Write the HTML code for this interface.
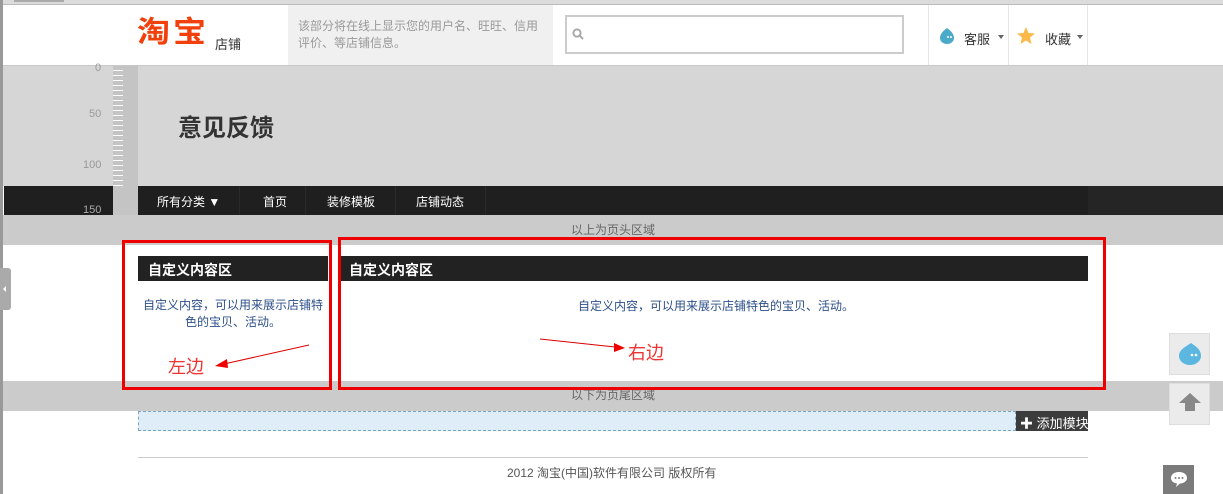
<!DOCTYPE html>
<html><head><meta charset="utf-8"><style>
*{margin:0;padding:0;box-sizing:border-box}
body{width:1223px;height:494px;overflow:hidden;background:#fff;position:relative;font-family:"Liberation Sans","Noto Sans CJK SC",sans-serif;font-size:12px;color:#333}
.a{position:absolute}
.t{position:absolute;white-space:nowrap}
.rul{background:#c4c4c4;background-image:repeating-linear-gradient(to bottom,transparent 0 4px,#fff 4px 5px);background-size:10px 100%;background-repeat:no-repeat}
</style></head><body>
<div class="a" style="left:0;top:0;width:1223px;height:5px;background:#dcdcdc;border-bottom:1px solid #bbb"></div>
<div class="a" style="left:14px;top:0;width:50px;height:2px;background:#aaa"></div>
<!-- header -->
<div class="t" style="left:137px;top:16px;font-size:33px;font-weight:bold;color:#f1400b;letter-spacing:3px;line-height:36px;transform:scaleY(0.9);transform-origin:top left">淘宝</div>
<div class="t" style="left:215px;top:34px;font-size:13px;color:#333">店铺</div>
<div class="a" style="left:288px;top:5px;width:265px;height:60px;background:#f0f0f0"></div>
<div class="t" style="left:298px;top:18px;font-size:12px;color:#999;line-height:17px">该部分将在线上显示您的用户名、旺旺、信用<br>评价、等店铺信息。</div>
<div class="a" style="left:565px;top:15px;width:339px;height:39px;border:2px solid #ccc;background:#fff"></div>
<svg class="a" style="left:572px;top:28px" width="12" height="12"><circle cx="5" cy="5" r="3.6" stroke="#aaa" stroke-width="2" fill="none"/><line x1="8" y1="8" x2="11" y2="11" stroke="#aaa" stroke-width="2"/></svg>
<div class="a" style="left:928px;top:5px;width:1px;height:60px;background:#e6e6e6"></div>
<div class="a" style="left:1008px;top:5px;width:1px;height:60px;background:#e6e6e6"></div>
<div class="a" style="left:1087px;top:5px;width:1px;height:60px;background:#e6e6e6"></div>
<svg class="a" style="left:939px;top:27px" width="17" height="18"><path d="M8 1 C4 4 1 7 1 11 a7 6 0 0 0 14 0 C15 7 12 4 8 1z" fill="#4ba9c9"/><circle cx="9" cy="10" r="1" fill="#fff"/><circle cx="12" cy="10" r="1" fill="#fff"/></svg>
<div class="t" style="left:964px;top:29px;font-size:13px;color:#333">客服</div>
<div class="a" style="left:998px;top:35px;border:3px solid transparent;border-top:4px solid #666"></div>
<svg class="a" style="left:1017px;top:27px" width="18" height="17"><polygon points="9,0 11.5,6 18,6.5 13,10.5 14.5,17 9,13.5 3.5,17 5,10.5 0,6.5 6.5,6" fill="#fbb84b"/></svg>
<div class="t" style="left:1045px;top:29px;font-size:13px;color:#333">收藏</div>
<div class="a" style="left:1077px;top:35px;border:3px solid transparent;border-top:4px solid #666"></div>
<!-- banner -->
<div class="a" style="left:0;top:65px;width:1223px;height:121px;background:#d6d6d6;border-top:1px solid #c8c8c8"></div>
<div class="a rul" style="left:113px;top:66px;width:25px;height:149px"></div>
<div class="t" style="left:178px;top:108px;font-size:24px;font-weight:bold;color:#333">意见反馈</div>
<!-- nav -->
<div class="a" style="left:4px;top:186px;width:1219px;height:29px;background:#1f1f1f"></div>
<div class="a" style="left:1088px;top:186px;width:135px;height:29px;background:#252525"></div>
<div class="a rul" style="left:113px;top:186px;width:25px;height:29px;background-position:0 -120px"></div>
<div class="t" style="left:95px;top:62px;font-size:11px;color:#999">0</div>
<div class="t" style="left:89px;top:108px;font-size:11px;color:#999">50</div>
<div class="t" style="left:83px;top:159px;font-size:11px;color:#999">100</div>
<div class="t" style="left:83px;top:204px;font-size:11px;color:#aaa">150</div>
<div class="t" style="left:157px;top:193px;font-size:12px;color:#fff">所有分类 ▼</div>
<div class="t" style="left:263px;top:193px;font-size:12px;color:#fff">首页</div>
<div class="t" style="left:327px;top:193px;font-size:12px;color:#fff">装修模板</div>
<div class="t" style="left:416px;top:193px;font-size:12px;color:#fff">店铺动态</div>
<div class="a" style="left:239px;top:186px;width:1px;height:29px;background:#2a2a2a"></div>
<div class="a" style="left:305px;top:186px;width:1px;height:29px;background:#2a2a2a"></div>
<div class="a" style="left:395px;top:186px;width:1px;height:29px;background:#2a2a2a"></div>
<div class="a" style="left:485px;top:186px;width:1px;height:29px;background:#2a2a2a"></div>
<!-- bands -->
<div class="a" style="left:0;top:215px;width:1223px;height:30px;background:#cbcbcb"></div>
<div class="t" style="left:571px;top:221px;font-size:12px;color:#666">以上为页头区域</div>
<div class="a" style="left:0;top:381px;width:1223px;height:30px;background:#cbcbcb"></div>
<div class="t" style="left:571px;top:386px;font-size:12px;color:#666">以下为页尾区域</div>
<!-- modules -->
<div class="a" style="left:138px;top:256px;width:190px;height:25px;background:#222"></div>
<div class="t" style="left:148px;top:260px;font-size:14px;font-weight:bold;color:#fff">自定义内容区</div>
<div class="t" style="left:138px;top:297px;width:190px;text-align:center;white-space:normal;font-size:12px;color:#2d4f8a;line-height:17px">自定义内容，可以用来展示店铺特色的宝贝、活动。</div>
<div class="a" style="left:340px;top:256px;width:748px;height:25px;background:#222"></div>
<div class="t" style="left:349px;top:260px;font-size:14px;font-weight:bold;color:#fff">自定义内容区</div>
<div class="t" style="left:578px;top:297px;font-size:12px;color:#2d4f8a">自定义内容，可以用来展示店铺特色的宝贝、活动。</div>
<!-- red boxes -->
<div class="a" style="left:122px;top:240px;width:210px;height:150px;border:3px solid #e00"></div>
<div class="a" style="left:338px;top:237px;width:768px;height:153px;border:3px solid #e00"></div>
<div class="t" style="left:168px;top:353px;font-size:18px;color:#e33">左边</div>
<div class="t" style="left:628px;top:339px;font-size:18px;color:#e33">右边</div>
<svg class="a" style="left:0;top:0" width="1223" height="494">
<line x1="309" y1="345" x2="224" y2="364" stroke="#d00" stroke-width="1"/><polygon points="215,366 227,359 228,368" fill="#e00"/>
<line x1="540" y1="339" x2="615" y2="347" stroke="#d00" stroke-width="1"/><polygon points="625,348 614,343 614,352" fill="#e00"/>
</svg>
<!-- add module -->
<div class="a" style="left:138px;top:411px;width:878px;height:20px;background:#deedf7;border:1px dashed #7fa4bd"></div>
<div class="a" style="left:1016px;top:411px;width:72px;height:20px;background:#3c3c3c"></div>
<div class="t" style="left:1020px;top:413px;font-size:13px;color:#fff">✚ 添加模块</div>
<div class="a" style="left:138px;top:457px;width:950px;height:1px;background:#ccc"></div>
<div class="t" style="left:507px;top:464px;font-size:12px;color:#555">2012 淘宝(中国)软件有限公司 版权所有</div>
<!-- left edge -->
<div class="a" style="left:0;top:0;width:3px;height:494px;background:#999"></div>
<div class="a" style="left:0;top:268px;width:11px;height:42px;background:#aaa;border-radius:0 3px 3px 0"></div>
<div class="a" style="left:3px;top:286px;border:3px solid transparent;border-right:3px solid #fff;border-left:0"></div>
<!-- right float -->
<div class="a" style="left:1169px;top:333px;width:41px;height:42px;background:#ebebeb;border:1px solid #ddd"></div>
<svg class="a" style="left:1177px;top:342px" width="26" height="24"><path d="M14 1 C8 5 2 8 2 14 a11 9 0 0 0 22 0 C24 8 20 5 14 1z" fill="#5bb7e0"/><circle cx="15" cy="13" r="1.3" fill="#fff"/><circle cx="19" cy="13" r="1.3" fill="#fff"/></svg>
<div class="a" style="left:1169px;top:383px;width:41px;height:42px;background:#ebebeb;border:1px solid #ddd"></div>
<svg class="a" style="left:1179px;top:393px" width="22" height="20"><polygon points="11,0 22,10 16,10 16,18 6,18 6,10 0,10" fill="#888"/></svg>
<div class="a" style="left:1163px;top:465px;width:31px;height:29px;background:#7b7b7b"></div>
<svg class="a" style="left:1170px;top:471px" width="18" height="17"><path d="M9 1 C4 1 1 3.5 1 7 c0 3 2.5 5 6 5.5 L6 16 L10 12.5 C14 12.3 17 10 17 7 C17 3.5 14 1 9 1z" fill="#fff"/><circle cx="5.5" cy="7" r="1" fill="#7b7b7b"/><circle cx="9" cy="7" r="1" fill="#7b7b7b"/><circle cx="12.5" cy="7" r="1" fill="#7b7b7b"/></svg>
</body></html>
